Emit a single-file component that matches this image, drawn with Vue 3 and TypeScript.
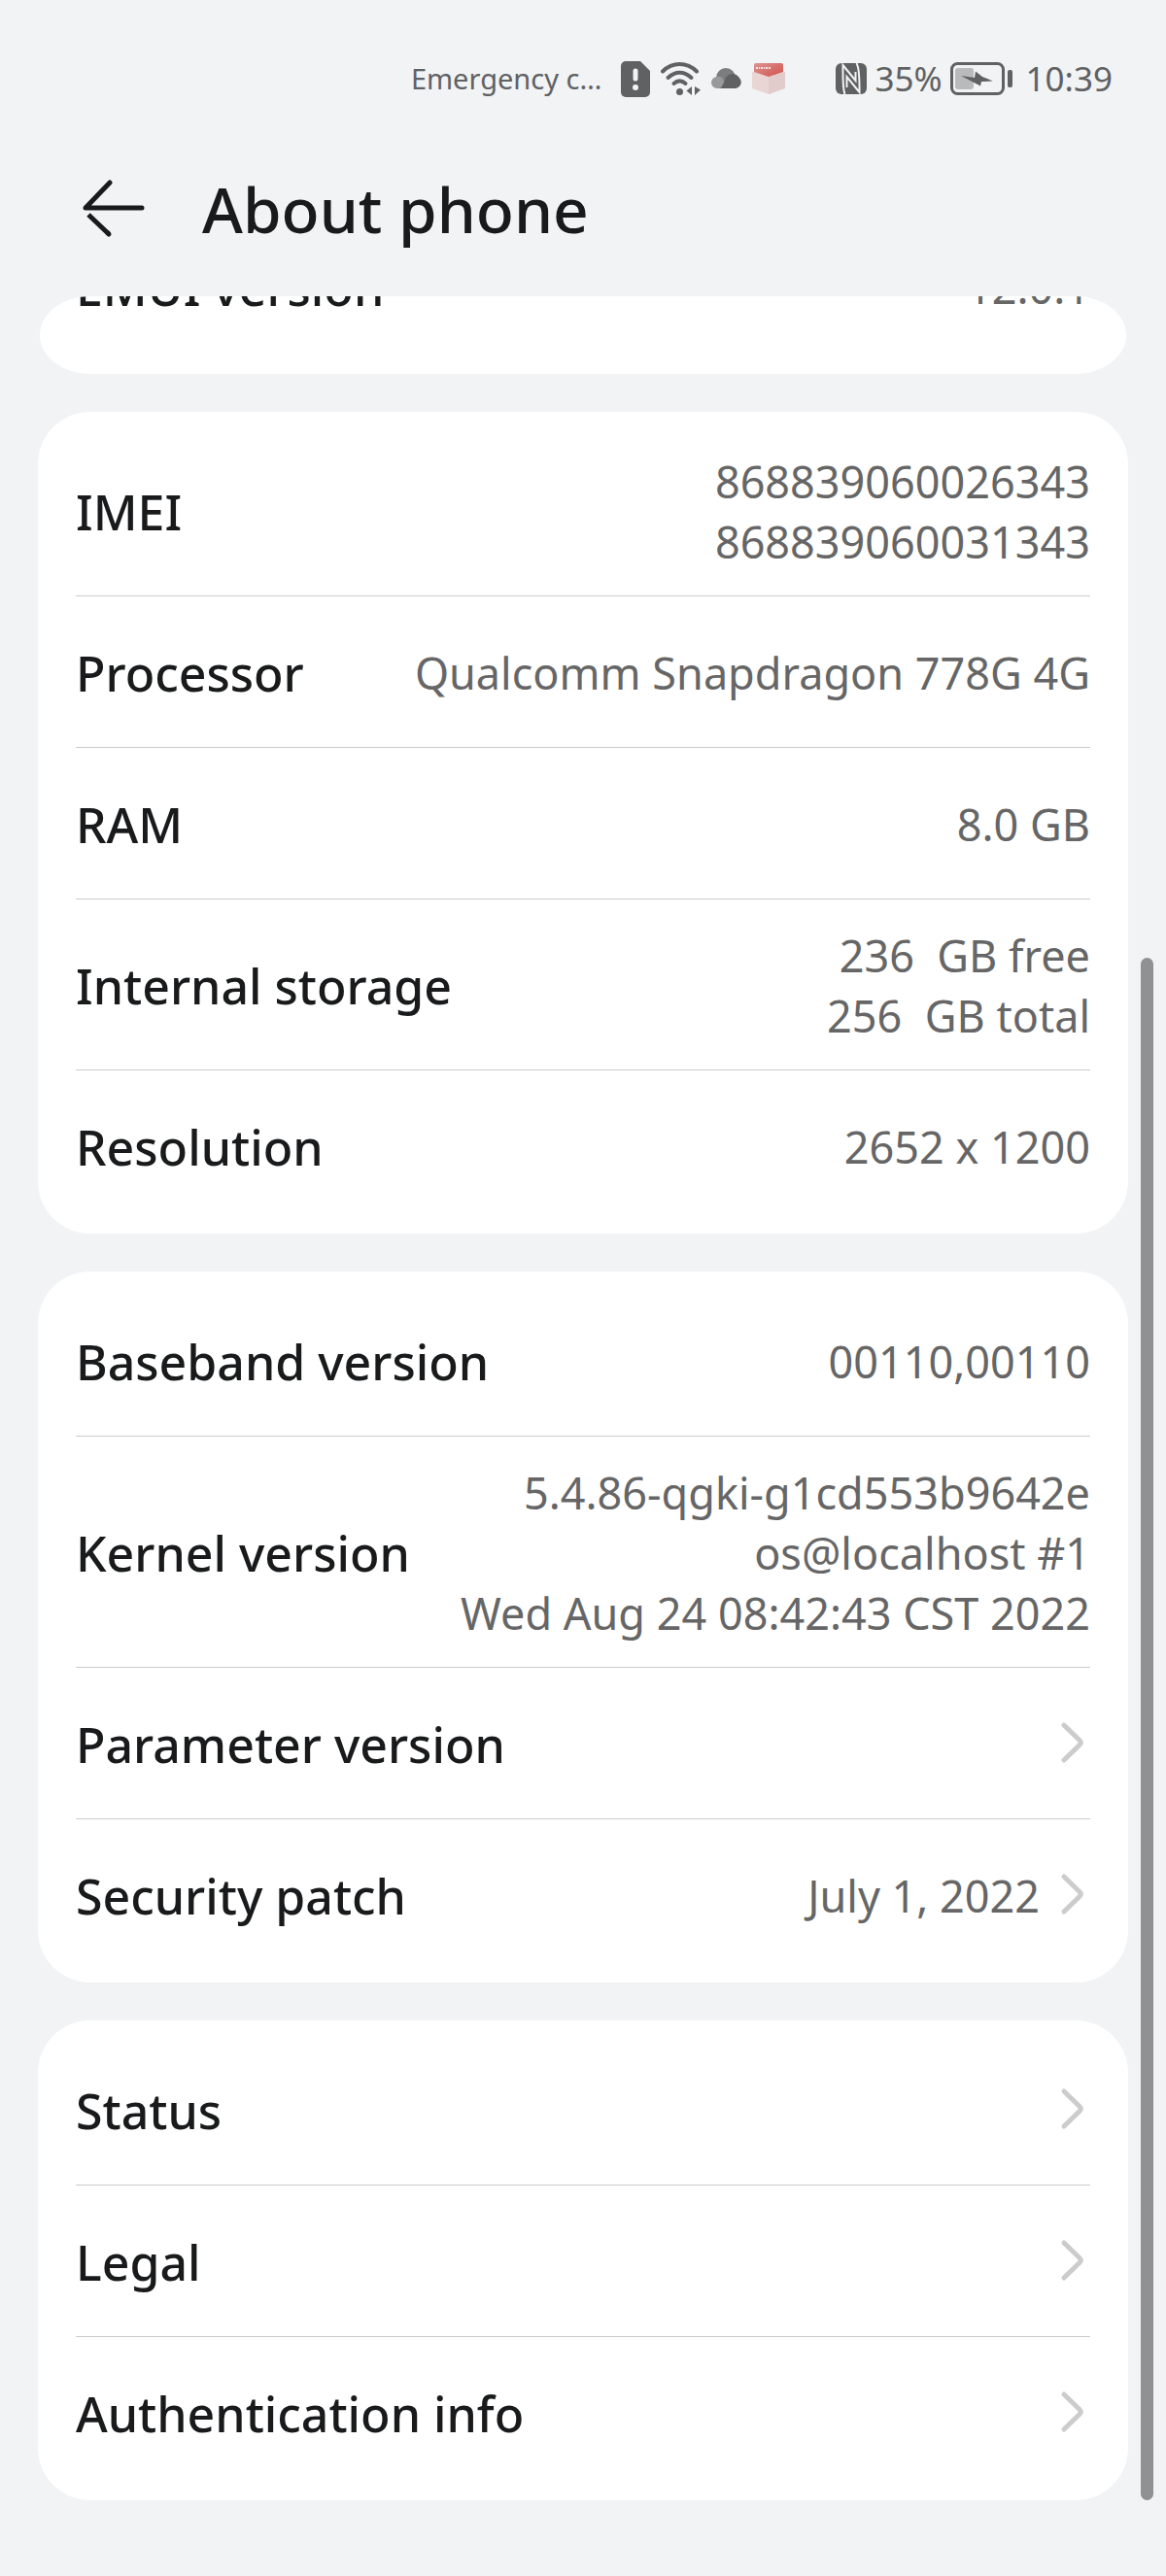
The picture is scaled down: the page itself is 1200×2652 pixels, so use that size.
<script setup lang="ts">
interface Item {
  label: string
  lines?: string[]
  link?: boolean
}

const clipped: Item = { label: 'EMUI version', lines: ['12.0.1'] }

const groups: Item[][] = [
  [
    { label: 'IMEI', lines: ['868839060026343', '868839060031343'] },
    { label: 'Processor', lines: ['Qualcomm Snapdragon 778G 4G'] },
    { label: 'RAM', lines: ['8.0 GB'] },
    { label: 'Internal storage', lines: ['236  GB free', '256  GB total'] },
    { label: 'Resolution', lines: ['2652 x 1200'] },
  ],
  [
    { label: 'Baseband version', lines: ['00110,00110'] },
    {
      label: 'Kernel version',
      lines: ['5.4.86-qgki-g1cd553b9642e', 'os@localhost #1', 'Wed Aug 24 08:42:43 CST 2022'],
    },
    { label: 'Parameter version', link: true },
    { label: 'Security patch', lines: ['July 1, 2022'], link: true },
  ],
  [
    { label: 'Status', link: true },
    { label: 'Legal', link: true },
    { label: 'Authentication info', link: true },
  ],
]
</script>

<template>
  <div class="screen">
    <div class="status-bar">
      <span class="carrier">Emergency c…</span>
      <div class="notices">
        <svg width="30" height="37" viewBox="0 0 30 37" aria-hidden="true">
          <path d="M5 0H20L30 10V32a5 5 0 0 1-5 5H5a5 5 0 0 1-5-5V5a5 5 0 0 1 5-5Z" fill="#606163" />
          <path d="M15 10V18" stroke="#f1f3f5" stroke-width="5" stroke-linecap="round" />
          <circle cx="15" cy="27" r="3" fill="#f1f3f5" />
        </svg>
        <svg width="41" height="35" viewBox="0 0 41 35" fill="none" stroke="#606163" aria-hidden="true">
          <g stroke-width="4" stroke-linecap="round">
            <path d="M2 9.500C12-0.500 27-0.500 37 9.500" />
            <path d="M7.500 16C15 9 24 9 31.500 16" />
            <path d="M13.500 22C17.500 18.500 21.500 18.500 25.500 22" />
          </g>
          <circle cx="19.500" cy="30.500" r="3.500" fill="#606163" stroke="none" />
          <path d="M32 25V34L26.500 29.500ZM35 25V34L41 28.500Z" fill="#606163" stroke="none" />
        </svg>
        <svg width="31" height="22" viewBox="0 0 31 22" aria-hidden="true">
          <circle cx="15" cy="10" r="10" fill="#7c7d7f" />
          <path d="M6 9C10 8 13 11 13 15L10 21H6A6 6 0 0 1 6 9Z" fill="#98999b" />
          <path d="M9 21C13 18 13 14 15 10C18 5 25 5 28 9C34 15 29 21 24 21Z" fill="#606163" />
        </svg>
        <svg width="34" height="32" viewBox="0 0 34 32" aria-hidden="true">
          <defs>
            <linearGradient id="flap" x1="0" y1="0" x2="1" y2="1">
              <stop offset="0" stop-color="#dc9492" />
              <stop offset="1" stop-color="#d2504b" />
            </linearGradient>
          </defs>
          <path d="M0 9H34V26L17 32L0 26Z" fill="#e9d6d4" />
          <path d="M17 14L34 9V26L17 32Z" fill="#e2cccb" />
          <path d="M4 0H30a2 2 0 0 1 2 2V9L17 14L2 9V2a2 2 0 0 1 2-2Z" fill="url(#flap)" />
          <path d="M4 5H8M9 5H13M14 5H19" stroke="#f8e9e8" stroke-width="2" stroke-dasharray="2 1" />
        </svg>
      </div>
      <svg width="32" height="32" viewBox="0 0 32 32" aria-hidden="true">
        <rect width="32" height="32" rx="6" fill="#606163" />
        <g fill="none" stroke="#f1f3f5" stroke-width="2">
          <path d="M9.500 32C7 26 7.500 12 7.500 2L20.500 18V9" />
          <path d="M21.500 0C25 6 24.500 20 24.500 30L11.500 14V25" />
        </g>
      </svg>
      <span class="percent">35%</span>
      <svg class="battery" width="64" height="34" viewBox="0 0 64 34" aria-hidden="true">
        <rect x="5" y="6" width="19" height="22" rx="3" fill="#b8babb" />
        <rect x="1.500" y="1.500" width="53" height="31" rx="6" fill="none" stroke="#606163" stroke-width="3" />
        <path d="M11 14L25 16L26 9.500L33 15L44 19.500L32 20L31 24.500Z" fill="#606163" />
        <rect x="59" y="8" width="5" height="18" rx="2" fill="#606163" />
      </svg>
      <time>10:39</time>
    </div>

    <header class="title-bar">
      <button class="back" type="button" aria-label="Back">
        <svg width="66" height="60" viewBox="0 0 66 60" fill="none" stroke="#191a1b" stroke-width="5" stroke-linecap="round">
          <path d="M62 29H4L29 3" stroke-linejoin="round" />
          <path d="M7 36L28 56" stroke-linecap="butt" />
          <path d="M27 55L28 56" />
        </svg>
      </button>
      <h1>About phone</h1>
    </header>

    <main class="list">
      <section class="card card-clipped">
        <div class="row">
          <span class="label">{{ clipped.label }}</span>
          <span class="value"><span v-for="line in clipped.lines" :key="line">{{ line }}</span></span>
        </div>
      </section>

      <section v-for="(group, index) in groups" :key="index" class="card">
        <component
          :is="item.link ? 'a' : 'div'"
          v-for="item in group"
          :key="item.label"
          class="row"
          :href="item.link ? '#' : undefined"
        >
          <span class="label">{{ item.label }}</span>
          <span class="value"><span v-for="line in item.lines" :key="line">{{ line }}</span></span>
          <svg v-if="item.link" class="chevron" width="36" height="44" viewBox="0 0 36 44" aria-hidden="true">
            <path d="M9 4L25 19.500Q27.500 22 25 24.500L9 40" fill="none" stroke="#cccccc" stroke-width="5" stroke-linecap="round" />
          </svg>
        </component>
      </section>

      <div class="scroll-thumb"></div>
    </main>
  </div>
</template>

<style>
body {
  background: #f1f3f5;
}
</style>

<style scoped>
.screen {
  padding-bottom: 78px;
  background: #f1f3f5;
  color: #191a1b;
  font-family: "Noto Sans", sans-serif;
}

svg {
  display: block;
  flex: none;
}

.status-bar {
  display: flex;
  align-items: center;
  justify-content: flex-end;
  height: 162px;
  padding-right: 55px;
  color: #606163;
  font-size: 35px;
  line-height: 48px;
}

.carrier {
  font-size: 29px;
}

.notices {
  display: flex;
  align-items: center;
  gap: 11px;
  margin: 0 52px 0 20px;
}

.percent {
  margin: 0 8px;
}

.battery {
  margin-right: 14px;
}

.title-bar {
  display: flex;
  align-items: center;
  gap: 58px;
  height: 106px;
  margin-bottom: 37px;
  padding: 0 84px;
}

.back {
  padding: 0;
  border: 0;
  background: none;
  cursor: pointer;
}

h1 {
  margin: 0;
  padding-top: 2px;
  font-size: 64px;
  font-weight: 500;
  line-height: 88px;
}

.list {
  position: relative;
  display: flex;
  flex-direction: column;
  gap: 39px;
  padding: 0 39px;
}

.card {
  padding: 13px 39px;
  border-radius: 54px;
  background: #ffffff;
}

/* The list is scrolled: only the lower part of this card is in view. */
.card-clipped {
  display: flex;
  align-items: flex-end;
  box-sizing: border-box;
  height: 80px;
  margin: 0 2px;
  padding: 13px 37px;
  border-radius: 52px / 40px;
  overflow: hidden;
}

.card-clipped .row {
  flex: 1;
}

.row {
  display: flex;
  align-items: center;
  box-sizing: border-box;
  min-height: 156px;
  padding: 26px 0;
  color: inherit;
  text-decoration: none;
}

.row + .row {
  box-shadow: inset 0 1px #cccccc;
}

.label {
  flex: none;
  padding-top: 4px;
  font-size: 50px;
  font-weight: 500;
  line-height: 64px;
}

.value {
  display: flex;
  flex: 1;
  flex-direction: column;
  align-items: flex-end;
  margin: 2px 0 -2px;
  color: #666666;
  font-size: 45px;
  line-height: 62px;
  white-space: pre;
}

.chevron {
  margin-left: 16px;
}

.scroll-thumb {
  position: absolute;
  top: 30%;
  right: 13px;
  bottom: 0;
  width: 13px;
  border-radius: 7px;
  background: #909193;
}
</style>
